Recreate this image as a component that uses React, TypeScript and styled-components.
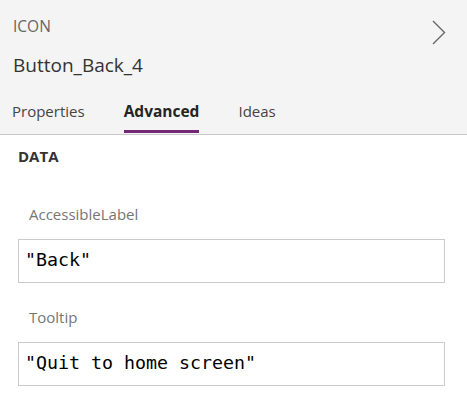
import React from "react";
import styled, { createGlobalStyle } from "styled-components";

const GlobalStyle = createGlobalStyle`
  html, body {
    margin: 0;
    padding: 0;
    background: #ffffff;
  }
  body {
    font-family: "Open Sans", "Noto Sans", sans-serif;
    color: #333333;
  }
  * { box-sizing: border-box; }
`;

const Panel = styled.div`
  width: 467px;
  height: 404px;
  background: #ffffff;
  overflow: hidden;
`;

const Header = styled.header`
  background: #f4f4f4;
  border-bottom: 1px solid #c8c8c8;
`;

const TopRow = styled.div`
  display: flex;
  justify-content: space-between;
  align-items: flex-start;
  padding: 16px 21px 0 13px;
`;

const TitleBlock = styled.div`
  display: flex;
  flex-direction: column;
  gap: 16px;
`;

const TypeLabel = styled.div`
  font-size: 15.5px;
  line-height: 20px;
  color: #666666;
  text-transform: uppercase;
`;

const ControlName = styled.div`
  font-size: 19px;
  line-height: 26px;
  color: #333333;
`;

const ExpandButton = styled.button`
  margin-top: 4px;
  padding: 0;
  border: 0;
  background: transparent;
  width: 14px;
  height: 25px;
  display: flex;
  cursor: pointer;
`;

const Tabs = styled.nav`
  display: flex;
  gap: 39px;
  padding: 23px 0 1px 12px;
`;

const Tab = styled.div<{ $active?: boolean }>`
  font-size: ${(p) => (p.$active ? "15.5px" : "15px")};
  line-height: 20px;
  padding-bottom: 9px;
  border-bottom: 3px solid ${(p) => (p.$active ? "#742774" : "transparent")};
  font-weight: ${(p) => (p.$active ? 700 : 400)};
  color: ${(p) => (p.$active ? "#252525" : "#444444")};
`;

const Body = styled.main`
  padding: 11px 22px 0 18px;
`;

const SectionTitle = styled.div`
  font-size: 15px;
  line-height: 20px;
  font-weight: 700;
  color: #333333;
`;

const FieldList = styled.div`
  display: flex;
  flex-direction: column;
  gap: 24px;
  margin-top: 38px;
`;

const Field = styled.div`
  display: flex;
  flex-direction: column;
  gap: 15px;
`;

const FieldLabel = styled.label`
  font-size: 15px;
  line-height: 20px;
  color: #767676;
  padding-left: 11px;
`;

const FormulaBox = styled.div`
  height: 44px;
  border: 1px solid #cbcbcb;
  background: #ffffff;
  padding: 0 6px 2px 6px;
  font-family: "DejaVu Sans Mono", "Liberation Mono", monospace;
  font-size: 18.3px;
  line-height: 40px;
  color: #000000;
  white-space: pre;
`;

const fields = [
  { label: "AccessibleLabel", value: '"Back"' },
  { label: "Tooltip", value: '"Quit to home screen"' },
];

export default function App() {
  return (
    <Panel>
      <GlobalStyle />
      <Header>
        <TopRow>
          <TitleBlock>
            <TypeLabel>Icon</TypeLabel>
            <ControlName>Button_Back_4</ControlName>
          </TitleBlock>
          <ExpandButton aria-label="Expand">
            <svg width="14" height="25" viewBox="0 0 14 25">
              <polyline
                points="1,1 12.5,12.5 1,24"
                fill="none"
                stroke="#666666"
                strokeWidth="1.4"
              />
            </svg>
          </ExpandButton>
        </TopRow>
        <Tabs>
          <Tab>Properties</Tab>
          <Tab $active>Advanced</Tab>
          <Tab>Ideas</Tab>
        </Tabs>
      </Header>
      <Body>
        <SectionTitle>DATA</SectionTitle>
        <FieldList>
          {fields.map((f) => (
            <Field key={f.label}>
              <FieldLabel>{f.label}</FieldLabel>
              <FormulaBox>{f.value}</FormulaBox>
            </Field>
          ))}
        </FieldList>
      </Body>
    </Panel>
  );
}
